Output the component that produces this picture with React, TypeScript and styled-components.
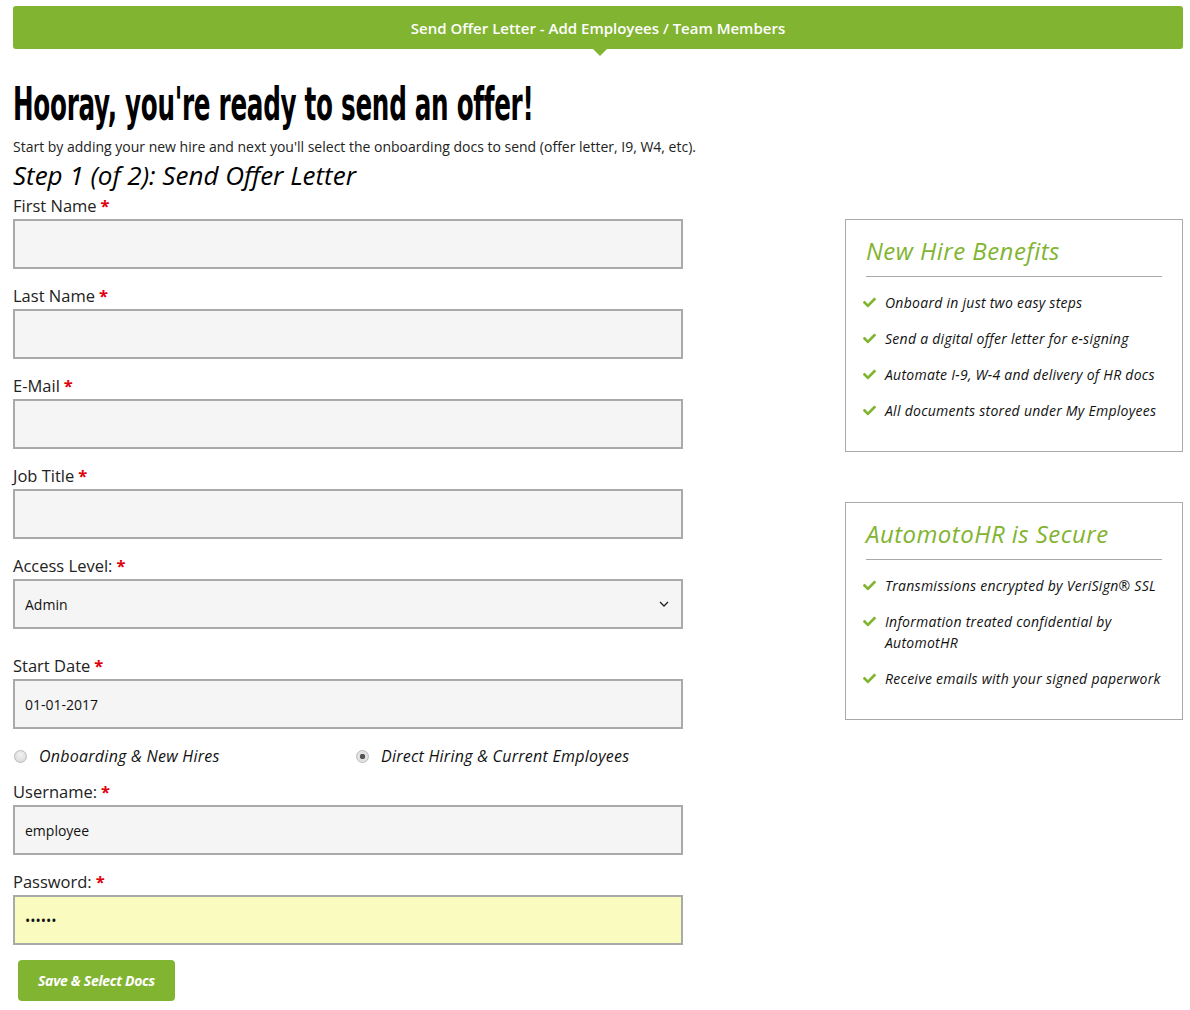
import React, { useState } from "react";
import styled, { createGlobalStyle } from "styled-components";
import { FaCheck } from "react-icons/fa";

const GREEN = "#81b431";

const GlobalStyle = createGlobalStyle`
  body {
    margin: 0;
    background: #fff;
    font-family: "Open Sans", "Liberation Sans", Arial, sans-serif;
    color: #111;
  }
  * { box-sizing: border-box; }
`;

const Page = styled.div`
  padding: 6px 7px 0 13px;
`;

const TopBar = styled.div`
  position: relative;
  height: 43px;
  background: ${GREEN};
  border-radius: 3px;
  color: #fff;
  font-size: 15px;
  font-weight: 600;
  display: flex;
  align-items: center;
  justify-content: center;

  &::after {
    content: "";
    position: absolute;
    left: 50%;
    bottom: -7px;
    margin-left: -5px;
    border-left: 7px solid transparent;
    border-right: 7px solid transparent;
    border-top: 7px solid ${GREEN};
  }
`;

const Heading = styled.h1`
  margin: 32px 0 0;
  font-family: "Liberation Sans Narrow", "DejaVu Sans Condensed", sans-serif;
  font-weight: 700;
  font-size: 46px;
  line-height: 46px;
  letter-spacing: -0.5px;
  color: #000;
  display: inline-block;
  transform: scaleX(0.596);
  transform-origin: left center;
  white-space: nowrap;
`;

const Intro = styled.p`
  margin: 10px 0 0;
  font-size: 14px;
  line-height: 20px;
  color: #222;
`;

const Content = styled.div`
  display: flex;
  justify-content: space-between;
  align-items: flex-start;
`;

const FormColumn = styled.form`
  width: 670px;
  display: flex;
  flex-direction: column;
`;

const StepTitle = styled.h2`
  margin: 2px 0 3px;
  font-size: 26px;
  line-height: 32px;
  font-style: italic;
  font-weight: 400;
  color: #000;
`;

const Field = styled.div<{ $gap?: number }>`
  display: flex;
  flex-direction: column;
  margin-bottom: ${(p) => p.$gap ?? 15}px;
`;

const Label = styled.label`
  font-size: 16.5px;
  line-height: 24px;
  color: #222;
  margin-bottom: 1px;
`;

const Star = styled.span`
  color: #e0000b;
  font-weight: 700;
  margin-left: 4px;
`;

const TextInput = styled.input<{ $autofill?: boolean }>`
  height: 50px;
  width: 100%;
  border: 2px solid #aaa;
  background: ${(p) => (p.$autofill ? "#f9fbbf" : "#f5f5f5")};
  padding: 0 10px;
  font-family: "Open Sans", "Liberation Sans", sans-serif;
  font-size: 14px;
  color: #111;
  outline: none;
`;

const SelectWrap = styled.div`
  position: relative;
`;

const Select = styled.select`
  appearance: none;
  height: 50px;
  width: 100%;
  border: 2px solid #aaa;
  background: #f5f5f5;
  padding: 0 10px;
  font-family: "Open Sans", "Liberation Sans", sans-serif;
  font-size: 14px;
  color: #111;
  outline: none;
`;

const Chevron = styled.svg`
  position: absolute;
  right: 14px;
  top: 22px;
  pointer-events: none;
`;

const RadioRow = styled.div`
  display: grid;
  grid-template-columns: 342px 1fr;
  margin: 0 0 12px;
`;

const RadioOption = styled.label`
  display: flex;
  align-items: center;
  font-size: 16px;
  font-style: italic;
  letter-spacing: 0.25px;
  line-height: 24px;
  color: #111;

  input {
    appearance: none;
    margin: 0 12px 0 1px;
    width: 13px;
    height: 13px;
    border-radius: 50%;
    border: 1px solid #bbb;
    background: radial-gradient(circle at 50% 35%, #f2f2f2, #d6d6d6);
  }

  input:checked {
    background: radial-gradient(circle, #555 0 2.5px, #e2e2e2 3px);
  }
`;

const SubmitButton = styled.button`
  align-self: flex-start;
  margin: 15px 0 0 5px;
  height: 41px;
  padding: 0 20px;
  background: ${GREEN};
  border: none;
  border-radius: 4px;
  color: #fff;
  font-family: "Open Sans", "Liberation Sans", sans-serif;
  font-size: 14px;
  font-weight: 700;
  font-style: italic;
  letter-spacing: -0.3px;
  cursor: pointer;
`;

const Aside = styled.aside`
  width: 338px;
  margin-top: 62px;
  display: flex;
  flex-direction: column;
  gap: 50px;
`;

const InfoBox = styled.div`
  border: 1px solid #aaa;
  padding: 13px 20px 30px 20px;
`;

const BoxTitle = styled.h3`
  margin: 0;
  padding-bottom: 7px;
  border-bottom: 1px solid #aaa;
  font-size: 24px;
  line-height: 36px;
  font-style: italic;
  font-weight: 400;
  letter-spacing: 0.45px;
  color: ${GREEN};
`;

const List = styled.ul`
  list-style: none;
  margin: 15px 0 0;
  padding: 0;
  display: flex;
  flex-direction: column;
  gap: 15px;
`;

const Item = styled.li`
  display: flex;
  align-items: flex-start;
  font-size: 14px;
  line-height: 21px;
  font-style: italic;
  letter-spacing: 0.27px;
  color: #111;

  svg {
    flex: none;
    margin: 4px 9px 0 -3px;
    color: ${GREEN};
  }
`;

const benefits = [
  "Onboard in just two easy steps",
  "Send a digital offer letter for e-signing",
  "Automate I-9, W-4 and delivery of HR docs",
  "All documents stored under My Employees",
];

const secure = [
  "Transmissions encrypted by VeriSign® SSL",
  "Information treated confidential by AutomotHR",
  "Receive emails with your signed paperwork",
];

const Required = ({ children }: { children: React.ReactNode }) => (
  <Label>
    {children}
    <Star>*</Star>
  </Label>
);

const App = () => {
  const [hireType, setHireType] = useState("direct");

  return (
    <Page>
      <GlobalStyle />
      <TopBar>Send Offer Letter - Add Employees / Team Members</TopBar>
      <Heading>Hooray, you're ready to send an offer!</Heading>
      <Intro>
        Start by adding your new hire and next you'll select the onboarding docs to send (offer letter, I9, W4, etc).
      </Intro>
      <Content>
        <FormColumn onSubmit={(e) => e.preventDefault()}>
          <StepTitle>Step 1 (of 2): Send Offer Letter</StepTitle>
          <Field>
            <Required>First Name</Required>
            <TextInput type="text" />
          </Field>
          <Field>
            <Required>Last Name</Required>
            <TextInput type="text" />
          </Field>
          <Field>
            <Required>E-Mail</Required>
            <TextInput type="email" />
          </Field>
          <Field>
            <Required>Job Title</Required>
            <TextInput type="text" />
          </Field>
          <Field $gap={25}>
            <Required>Access Level:</Required>
            <SelectWrap>
              <Select defaultValue="admin">
                <option value="admin">Admin</option>
                <option value="employee">Employee</option>
              </Select>
              <Chevron width="10" height="6" viewBox="0 0 10 6">
                <path d="M1 1l4 4 4-4" fill="none" stroke="#222" strokeWidth="1.3" />
              </Chevron>
            </SelectWrap>
          </Field>
          <Field>
            <Required>Start Date</Required>
            <TextInput type="text" defaultValue="01-01-2017" />
          </Field>
          <RadioRow>
            <RadioOption>
              <input
                type="radio"
                name="hireType"
                checked={hireType === "onboarding"}
                onChange={() => setHireType("onboarding")}
              />
              Onboarding &amp; New Hires
            </RadioOption>
            <RadioOption>
              <input
                type="radio"
                name="hireType"
                checked={hireType === "direct"}
                onChange={() => setHireType("direct")}
              />
              Direct Hiring &amp; Current Employees
            </RadioOption>
          </RadioRow>
          <Field>
            <Required>Username:</Required>
            <TextInput type="text" defaultValue="employee" />
          </Field>
          <Field $gap={0}>
            <Required>Password:</Required>
            <TextInput type="password" defaultValue="secret" $autofill />
          </Field>
          <SubmitButton type="submit">Save &amp; Select Docs</SubmitButton>
        </FormColumn>
        <Aside>
          <InfoBox>
            <BoxTitle>New Hire Benefits</BoxTitle>
            <List>
              {benefits.map((b) => (
                <Item key={b}>
                  <FaCheck size={13} />
                  {b}
                </Item>
              ))}
            </List>
          </InfoBox>
          <InfoBox>
            <BoxTitle>AutomotoHR is Secure</BoxTitle>
            <List>
              {secure.map((s) => (
                <Item key={s}>
                  <FaCheck size={13} />
                  {s}
                </Item>
              ))}
            </List>
          </InfoBox>
        </Aside>
      </Content>
    </Page>
  );
};

export default App;
